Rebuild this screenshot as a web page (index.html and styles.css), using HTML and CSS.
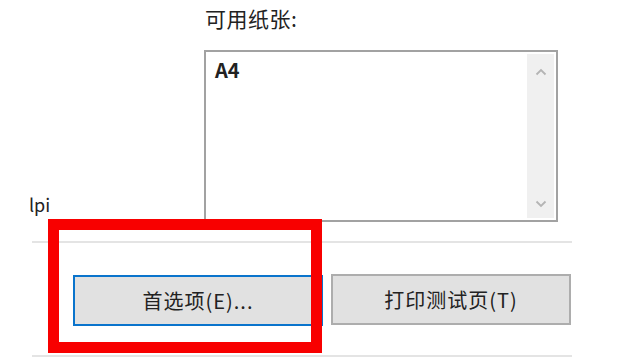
FILE: index.html
```html
<!DOCTYPE html>
<html lang="zh-CN">
<head>
<meta charset="UTF-8" />
<meta name="viewport" content="width=device-width, initial-scale=1" />
<title>打印机属性</title>
<link rel="stylesheet" href="styles.css">
</head>
<body>
<main class="dialog">
  <section class="top">
    <div class="left-col">
      <span class="unit">lpi</span>
    </div>
    <div class="right-col">
      <label class="field-label" for="paper">可用纸张:</label>
      <div class="listbox" id="paper">
        <ul class="list-items">
          <li>A4</li>
        </ul>
        <div class="scrollbar">
          <svg class="arrow" width="12" height="8" viewBox="0 0 12 8">
            <polyline points="1.5,6.5 6,2 10.5,6.5" fill="none" stroke="#b4b4b4" stroke-width="1.8" />
          </svg>
          <svg class="arrow" width="12" height="8" viewBox="0 0 12 8">
            <polyline points="1.5,1.5 6,6 10.5,1.5" fill="none" stroke="#b4b4b4" stroke-width="1.8" />
          </svg>
        </div>
      </div>
    </div>
  </section>
  <hr class="sep" />
  <section class="buttons">
    <button class="btn btn-default">首选项(E)...</button>
    <button class="btn">打印测试页(T)</button>
  </section>
  <hr class="sep sep-bottom" />
  <!-- 红框标注 -->
  <div class="highlight"></div>
</main>
</body>
</html>
```

FILE: styles.css
```css
html, body {
  margin: 0;
  padding: 0;
  background: #fff;
}
body {
  font-family: "Noto Sans CJK SC", "Noto Sans", sans-serif;
  color: #222;
}
.dialog {
  position: relative;
  width: 620px;
  height: 357px;
  overflow: hidden;
}
.top {
  display: flex;
  height: 241px;
}
.left-col {
  width: 204px;
  display: flex;
  align-items: flex-end;
  padding-left: 29px;
  padding-bottom: 25px;
  box-sizing: border-box;
}
.unit {
  font-size: 18px;
  line-height: 24px;
}
.right-col {
  display: flex;
  flex-direction: column;
  padding-top: 5px;
}
.field-label {
  font-size: 21px;
  line-height: 27px;
  letter-spacing: 0.5px;
  padding-left: 1px;
  margin-bottom: 18px;
}
.listbox {
  display: flex;
  width: 354px;
  height: 172px;
  border: 2px solid #a2a2a2;
  padding: 2px;
  box-sizing: border-box;
}
.list-items {
  flex: 1;
  margin: 0;
  padding: 4px 0 0 7px;
  list-style: none;
}
.list-items li {
  font-size: 20px;
  line-height: 24px;
  font-weight: 600;
}
.scrollbar {
  width: 27px;
  background: #f0f0f0;
  display: flex;
  flex-direction: column;
  justify-content: space-between;
  align-items: center;
  padding: 14px 0 10px;
}
.arrow {
  display: block;
}
.sep {
  margin: 0 0 0 32px;
  width: 540px;
  border: 0;
  border-top: 2px solid #e4e4e4;
}
.buttons {
  display: flex;
  gap: 8px;
  padding: 30px 0 0 73px;
  height: 83px;
  box-sizing: border-box;
  align-items: flex-start;
}
.btn {
  font-family: inherit;
  font-size: 20px;
  letter-spacing: 1px;
  color: #222;
  height: 51px;
  width: 240px;
  background: #e1e1e1;
  border: 2px solid #adadad;
  margin-top: 1px;
}
.btn-default {
  width: 250px;
  border-color: #0a74cc;
  margin-top: 2px;
}
.sep-bottom {
  margin-top: 29px;
}
.highlight {
  position: absolute;
  left: 48px;
  top: 219px;
  width: 274px;
  height: 134px;
  border: 11px solid #f80000;
  box-sizing: border-box;
}
```
